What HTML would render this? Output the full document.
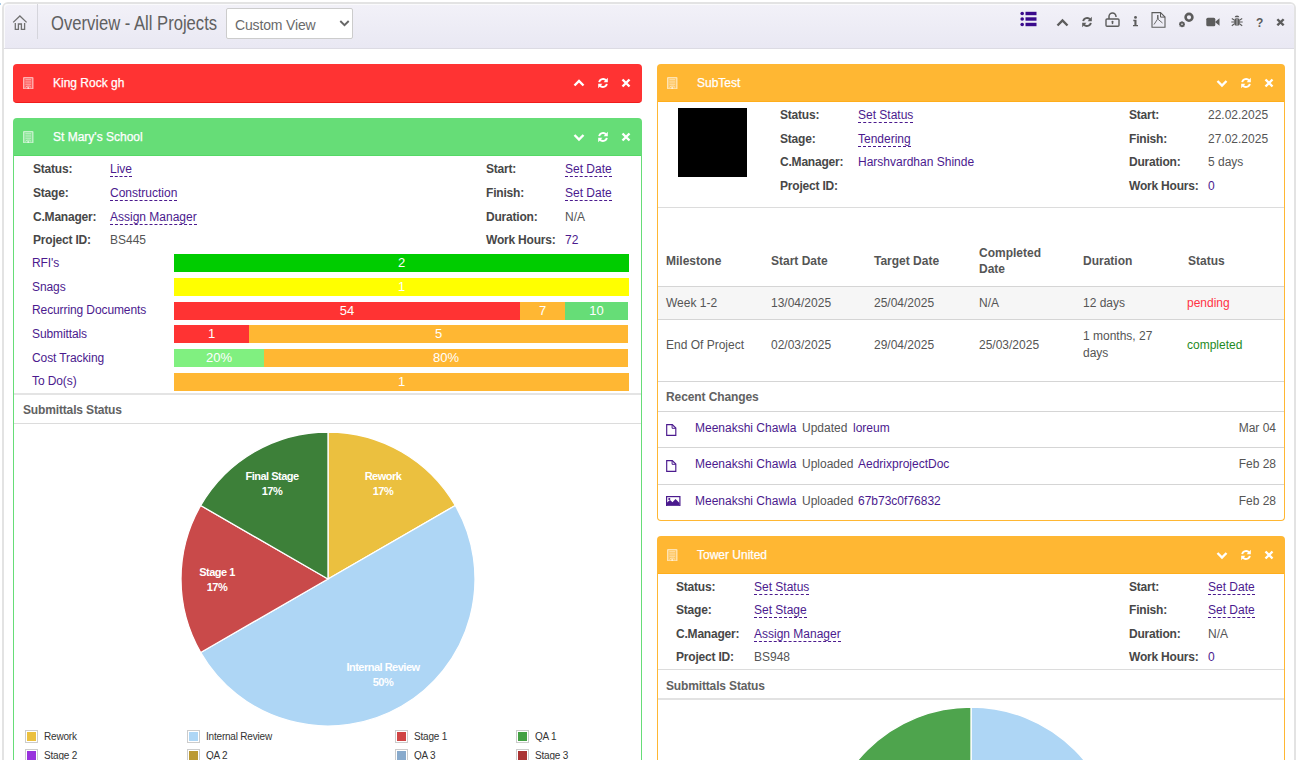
<!DOCTYPE html>
<html><head><meta charset="utf-8">
<style>
*{box-sizing:border-box;margin:0;padding:0}
html,body{width:1300px;height:760px;overflow:hidden;background:#fff;font-family:"Liberation Sans",sans-serif;font-size:12px;color:#555;position:relative}
.a{position:absolute}
.t{position:absolute;white-space:nowrap}
.b{font-weight:bold}
.dl{color:#4b1a8e;border-bottom:1px dashed #4b1a8e}
.bar{position:absolute;height:18px;color:#fff;text-align:center;line-height:18px;font-size:13px;overflow:hidden}
.pl{position:absolute;color:#fff;font-weight:bold;font-size:11px;text-align:center;line-height:15px;width:120px;letter-spacing:-0.5px}
.lg{position:absolute;width:13px;height:13px;border:1px solid #ccc;padding:1px;background:#fff}
.lg i{display:block;width:9px;height:9px}
.lt{position:absolute;font-size:10px;color:#333;line-height:13px;white-space:nowrap}
</style></head><body>
<div class="a" style="left:2px;top:2px;width:1294px;height:820px;border:2px solid #e3e3e3;border-radius:6px;background:#fff"></div>
<div class="a" style="left:4px;top:4px;width:1290px;height:45px;background:linear-gradient(#f2f1f8,#e9e8f3);border-bottom:1px solid #dcdbe3;border-radius:4px 4px 0 0;box-shadow:inset 1px 1px #fafafc"></div>
<div class="a" style="left:0px;top:3px;width:1px;height:2px;background:#a8cbe8"></div>
<div class="a" style="left:37px;top:4px;width:1px;height:35px;background:#d5d5dc"></div>
<svg class="a" style="left:8px;top:10px" width="24" height="24" viewBox="0 0 24 24"><path d="M5.2 12.4 L11.9 6 L18.6 12.4" fill="none" stroke="#707070" stroke-width="1.3"/><path d="M7.3 13 V19.3 H10.4 V14 H13.4 V19.3 H16.6 V13" fill="none" stroke="#707070" stroke-width="1.3"/></svg>
<div class="t " style="left:51px;top:11.87px;font-size:20px;line-height:22px;color:#606060;transform:scaleX(0.83);transform-origin:0 0">Overview - All Projects</div>
<div class="a" style="left:226px;top:8px;width:127px;height:31px;border:1px solid #ccc;background:#fff;border-radius:2px"></div>
<div class="t " style="left:235px;top:16.95px;font-size:14px;line-height:16px;color:#6a6a6a;letter-spacing:-0.15px">Custom View</div>
<svg class="a" style="left:339px;top:19px" width="11" height="9" viewBox="0 0 11 9"><path d="M1.3 2 L5.5 6.2 L9.7 2" fill="none" stroke="#666" stroke-width="1.9"/></svg>
<svg class="a" style="left:1020px;top:11px" width="17" height="16" viewBox="0 0 17 16"><circle cx="2.2" cy="2.5" r="1.8" fill="#3a0a8c"/><circle cx="2.2" cy="8" r="1.8" fill="#3a0a8c"/><circle cx="2.2" cy="13.5" r="1.8" fill="#3a0a8c"/><rect x="5.5" y="0.8" width="11" height="3.4" fill="#3a0a8c"/><rect x="5.5" y="6.3" width="11" height="3.4" fill="#3a0a8c"/><rect x="5.5" y="11.8" width="11" height="3.4" fill="#3a0a8c"/></svg>
<svg class="a" style="left:1056px;top:18px" width="13" height="9" viewBox="0 0 13 9"><path d="M1.5 7.5 L6.5 2.5 L11.5 7.5" fill="none" stroke="#5c5c5c" stroke-width="2.4"/></svg>
<svg class="a" style="left:1081px;top:15.5px" width="12" height="12" viewBox="0 0 12 12"><path d="M2.2 5.2 A3.9 3.9 0 0 1 9.2 3.6" fill="none" stroke="#5c5c5c" stroke-width="1.9"/><path d="M10.8 0.8 V5.2 H6.6 Z" fill="#5c5c5c"/><path d="M9.8 6.8 A3.9 3.9 0 0 1 2.8 8.4" fill="none" stroke="#5c5c5c" stroke-width="1.9"/><path d="M1.2 11.2 V6.8 H5.4 Z" fill="#5c5c5c"/></svg>
<svg class="a" style="left:1105px;top:12px" width="15" height="15" viewBox="0 0 15 15"><path d="M4 7 V4.5 A3.5 3.5 0 0 1 11 4.5 V5" fill="none" stroke="#5c5c5c" stroke-width="1.5"/><rect x="1" y="7" width="13" height="7.3" rx="1" fill="none" stroke="#5c5c5c" stroke-width="1.4"/><rect x="6.8" y="9.5" width="1.4" height="2.6" fill="#5c5c5c"/><circle cx="7.5" cy="9.8" r="1" fill="#5c5c5c"/></svg>
<svg class="a" style="left:1132px;top:16px" width="7" height="11" viewBox="0 0 7 11"><circle cx="3.5" cy="1.4" r="1.4" fill="#5c5c5c"/><path d="M1.3 3.8 H4.5 V8.9 H6 V10.3 H1 V8.9 H2.4 V5.2 H1.3 Z" fill="#5c5c5c"/></svg>
<svg class="a" style="left:1150.5px;top:11.5px" width="15" height="16" viewBox="0 0 15 16"><path d="M1 0.6 H9.5 L14 5.1 V15.3 H1 Z" fill="none" stroke="#5c5c5c" stroke-width="1.1"/><path d="M9.5 0.6 V5.1 H14" fill="none" stroke="#5c5c5c" stroke-width="1"/><path d="M3 12.5 L6.3 7.5 L6.8 3 L7.3 7.5 L11.5 11" fill="none" stroke="#5c5c5c" stroke-width="0.9"/></svg>
<svg class="a" style="left:1177.5px;top:11.5px" width="17" height="16" viewBox="0 0 17 16"><circle cx="11" cy="5.3" r="3.4" fill="none" stroke="#5c5c5c" stroke-width="2.6"/><circle cx="4" cy="12.3" r="1.9" fill="none" stroke="#5c5c5c" stroke-width="1.8"/><path d="M4 9.3 V15.3 M1 12.3 H7 M1.9 10.2 L6.1 14.4 M6.1 10.2 L1.9 14.4" stroke="#5c5c5c" stroke-width="0.9"/><circle cx="4" cy="12.3" r="0.8" fill="#eeeef4"/></svg>
<svg class="a" style="left:1205.5px;top:16.5px" width="14" height="10" viewBox="0 0 14 10"><rect x="0.3" y="0.8" width="9" height="8.4" rx="1.5" fill="#5c5c5c"/><path d="M9 5 L13.5 1.2 V8.8 Z" fill="#5c5c5c"/></svg>
<svg class="a" style="left:1231px;top:15px" width="12" height="12" viewBox="0 0 12 12"><path d="M3.7 2.3 A2.3 1.9 0 0 1 8.3 2.3 Z" fill="#5c5c5c"/><rect x="3.2" y="3.2" width="5.6" height="7.6" rx="2.3" fill="#5c5c5c"/><path d="M0.8 3.6 L3.2 5 M11.2 3.6 L8.8 5 M0.3 7 H3.2 M11.7 7 H8.8 M0.8 10.8 L3.2 9 M11.2 10.8 L8.8 9" stroke="#5c5c5c" stroke-width="1.1"/><rect x="5.7" y="3.8" width="0.6" height="7" fill="#eeeef4"/></svg>
<div class="t b" style="left:1256px;top:15.64px;font-size:12px;line-height:14px;color:#5c5c5c">?</div>
<svg class="a" style="left:1275.5px;top:17.8px" width="9" height="8.6" viewBox="0 0 10 10" preserveAspectRatio="none"><path d="M1.5 1.5 L8.5 8.5 M8.5 1.5 L1.5 8.5" stroke="#5c5c5c" stroke-width="2.7"/></svg>
<div class="a" style="left:13px;top:64px;width:629px;height:39px;background:#ff3333;border-radius:4px;border-bottom:1px solid #f01c1c"></div>
<svg class="a" style="left:23.3px;top:76.6px" width="10.5" height="12.5" viewBox="0 0 10.5 12.5"><rect x="0.65" y="0.65" width="9.2" height="11.2" rx="0.4" fill="rgba(255,255,255,0.22)" stroke="rgba(255,255,255,0.6)" stroke-width="1.3"/><path d="M2.4 2.5 H8.1 M2.4 4.2 H8.1 M2.4 5.9 H8.1 M2.4 7.6 H8.1" stroke="rgba(255,255,255,0.42)" stroke-width="0.9" fill="none"/><path d="M2.4 10.4 L3.9 9.2 H6.6 L8.1 10.4" stroke="rgba(255,255,255,0.5)" stroke-width="1" fill="none"/><rect x="4.4" y="10" width="1.7" height="2" fill="rgba(255,255,255,0.6)"/></svg>
<div class="t " style="left:53px;top:76.44px;font-size:12px;line-height:14px;color:#fff;-webkit-text-stroke:0.25px #fff">King Rock gh</div>
<svg class="a" style="left:573px;top:78px" width="12" height="10" viewBox="0 0 12 10"><path d="M1.5 7.5 L6 3 L10.5 7.5" fill="none" stroke="#fff" stroke-width="2.4"/></svg>
<svg class="a" style="left:597px;top:77px" width="12" height="12" viewBox="0 0 12 12"><path d="M2.2 5.2 A3.9 3.9 0 0 1 9.2 3.6" fill="none" stroke="#fff" stroke-width="1.9"/><path d="M10.8 0.8 V5.2 H6.6 Z" fill="#fff"/><path d="M9.8 6.8 A3.9 3.9 0 0 1 2.8 8.4" fill="none" stroke="#fff" stroke-width="1.9"/><path d="M1.2 11.2 V6.8 H5.4 Z" fill="#fff"/></svg>
<svg class="a" style="left:621px;top:78px" width="10" height="10" viewBox="0 0 10 10" preserveAspectRatio="none"><path d="M1.5 1.5 L8.5 8.5 M8.5 1.5 L1.5 8.5" stroke="#fff" stroke-width="2.4"/></svg>
<div class="a" style="left:13px;top:118px;width:629px;height:38px;background:#66dd77;border-radius:4px 4px 0 0;border-bottom:1px solid #55d866"></div>
<svg class="a" style="left:23.3px;top:130.6px" width="10.5" height="12.5" viewBox="0 0 10.5 12.5"><rect x="0.65" y="0.65" width="9.2" height="11.2" rx="0.4" fill="rgba(255,255,255,0.22)" stroke="rgba(255,255,255,0.6)" stroke-width="1.3"/><path d="M2.4 2.5 H8.1 M2.4 4.2 H8.1 M2.4 5.9 H8.1 M2.4 7.6 H8.1" stroke="rgba(255,255,255,0.42)" stroke-width="0.9" fill="none"/><path d="M2.4 10.4 L3.9 9.2 H6.6 L8.1 10.4" stroke="rgba(255,255,255,0.5)" stroke-width="1" fill="none"/><rect x="4.4" y="10" width="1.7" height="2" fill="rgba(255,255,255,0.6)"/></svg>
<div class="t " style="left:53px;top:130.44px;font-size:12px;line-height:14px;color:#fff;-webkit-text-stroke:0.25px #fff">St Mary's School</div>
<svg class="a" style="left:573px;top:132px" width="12" height="10" viewBox="0 0 12 10"><path d="M1.5 3 L6 7.5 L10.5 3" fill="none" stroke="#fff" stroke-width="2.4"/></svg>
<svg class="a" style="left:597px;top:131px" width="12" height="12" viewBox="0 0 12 12"><path d="M2.2 5.2 A3.9 3.9 0 0 1 9.2 3.6" fill="none" stroke="#fff" stroke-width="1.9"/><path d="M10.8 0.8 V5.2 H6.6 Z" fill="#fff"/><path d="M9.8 6.8 A3.9 3.9 0 0 1 2.8 8.4" fill="none" stroke="#fff" stroke-width="1.9"/><path d="M1.2 11.2 V6.8 H5.4 Z" fill="#fff"/></svg>
<svg class="a" style="left:621px;top:132px" width="10" height="10" viewBox="0 0 10 10" preserveAspectRatio="none"><path d="M1.5 1.5 L8.5 8.5 M8.5 1.5 L1.5 8.5" stroke="#fff" stroke-width="2.4"/></svg>
<div class="a" style="left:13px;top:155px;width:629px;height:700px;border:1px solid #66dd77;border-top:none"></div>
<div class="t b" style="left:33px;top:162.44px;font-size:12px;line-height:14px;color:#474747;letter-spacing:-0.2px">Status:</div>
<div class="t " style="left:110px;top:162.44px;font-size:12px;line-height:14px;"><span class="dl">Live</span></div>
<div class="t b" style="left:486px;top:162.44px;font-size:12px;line-height:14px;color:#474747;letter-spacing:-0.2px">Start:</div>
<div class="t " style="left:565px;top:162.44px;font-size:12px;line-height:14px;"><span class="dl">Set Date</span></div>
<div class="t b" style="left:33px;top:186.04px;font-size:12px;line-height:14px;color:#474747;letter-spacing:-0.2px">Stage:</div>
<div class="t " style="left:110px;top:186.04px;font-size:12px;line-height:14px;"><span class="dl">Construction</span></div>
<div class="t b" style="left:486px;top:186.04px;font-size:12px;line-height:14px;color:#474747;letter-spacing:-0.2px">Finish:</div>
<div class="t " style="left:565px;top:186.04px;font-size:12px;line-height:14px;"><span class="dl">Set Date</span></div>
<div class="t b" style="left:33px;top:209.54px;font-size:12px;line-height:14px;color:#474747;letter-spacing:-0.2px">C.Manager:</div>
<div class="t " style="left:110px;top:209.54px;font-size:12px;line-height:14px;"><span class="dl">Assign Manager</span></div>
<div class="t b" style="left:486px;top:209.54px;font-size:12px;line-height:14px;color:#474747;letter-spacing:-0.2px">Duration:</div>
<div class="t " style="left:565px;top:209.54px;font-size:12px;line-height:14px;color:#555">N/A</div>
<div class="t b" style="left:33px;top:233.04px;font-size:12px;line-height:14px;color:#474747;letter-spacing:-0.2px">Project ID:</div>
<div class="t " style="left:110px;top:233.04px;font-size:12px;line-height:14px;color:#555">BS445</div>
<div class="t b" style="left:486px;top:233.04px;font-size:12px;line-height:14px;color:#474747;letter-spacing:-0.2px">Work Hours:</div>
<div class="t " style="left:565px;top:233.04px;font-size:12px;line-height:14px;color:#4b1a8e">72</div>
<div class="t " style="left:32px;top:255.94px;font-size:12px;line-height:14px;color:#4b1a8e;letter-spacing:-0.1px">RFI's</div>
<div class="t " style="left:32px;top:279.64px;font-size:12px;line-height:14px;color:#4b1a8e;letter-spacing:-0.1px">Snags</div>
<div class="t " style="left:32px;top:303.34px;font-size:12px;line-height:14px;color:#4b1a8e;letter-spacing:-0.1px">Recurring Documents</div>
<div class="t " style="left:32px;top:327.04px;font-size:12px;line-height:14px;color:#4b1a8e;letter-spacing:-0.1px">Submittals</div>
<div class="t " style="left:32px;top:350.74px;font-size:12px;line-height:14px;color:#4b1a8e;letter-spacing:-0.1px">Cost Tracking</div>
<div class="t " style="left:32px;top:374.44px;font-size:12px;line-height:14px;color:#4b1a8e;letter-spacing:-0.1px">To Do(s)</div>
<div class="bar" style="left:174px;top:254.3px;width:455px;background:#00cc00;color:#fff">2</div>
<div class="bar" style="left:174px;top:278.0px;width:455px;background:#ffff00;color:#fff">1</div>
<div class="bar" style="left:174px;top:301.7px;width:346px;background:#ff3333;color:#fff">54</div>
<div class="bar" style="left:520px;top:301.7px;width:45px;background:#ffb733;color:#fff">7</div>
<div class="bar" style="left:565px;top:301.7px;width:63px;background:#66dd77;color:#fff">10</div>
<div class="bar" style="left:174px;top:325.4px;width:75px;background:#ff3333;color:#fff">1</div>
<div class="bar" style="left:249px;top:325.4px;width:379px;background:#ffb733;color:#fff">5</div>
<div class="bar" style="left:174px;top:349.1px;width:90px;background:#80f080;color:#fff">20%</div>
<div class="bar" style="left:264px;top:349.1px;width:364px;background:#ffb733;color:#fff">80%</div>
<div class="bar" style="left:174px;top:372.8px;width:455px;background:#ffb733;color:#fff">1</div>
<div class="a" style="left:14px;top:393px;width:627px;height:2px;background:#e4e4e4"></div>
<div class="t b" style="left:23px;top:403.14px;font-size:12px;line-height:14px;color:#626262;letter-spacing:-0.15px">Submittals Status</div>
<div class="a" style="left:14px;top:423px;width:627px;height:1px;background:#dcdcdc"></div>
<svg class="a" style="left:178.5px;top:430px" width="298" height="298" viewBox="178.5 430 298 298"><path d="M327.5 579 L327.50 432.00 A147 147 0 0 1 454.81 505.50 Z" fill="#ebc03f" stroke="#fff" stroke-width="1.3" stroke-linejoin="round"/><path d="M327.5 579 L454.81 505.50 A147 147 0 0 1 200.19 652.50 Z" fill="#aed6f5" stroke="#fff" stroke-width="1.3" stroke-linejoin="round"/><path d="M327.5 579 L200.19 652.50 A147 147 0 0 1 200.19 505.50 Z" fill="#c94a4a" stroke="#fff" stroke-width="1.3" stroke-linejoin="round"/><path d="M327.5 579 L200.19 505.50 A147 147 0 0 1 327.50 432.00 Z" fill="#3d8039" stroke="#fff" stroke-width="1.3" stroke-linejoin="round"/></svg>
<div class="pl" style="left:212px;top:469px">Final Stage<br>17%</div>
<div class="pl" style="left:323px;top:469px">Rework<br>17%</div>
<div class="pl" style="left:157px;top:565px">Stage 1<br>17%</div>
<div class="pl" style="left:323px;top:660px">Internal Review<br>50%</div>
<div class="lg" style="left:25px;top:730px"><i style="background:#ebc03f"></i></div>
<div class="lt" style="left:44px;top:730px;letter-spacing:-0.2px">Rework</div>
<div class="lg" style="left:187px;top:730px"><i style="background:#aed6f5"></i></div>
<div class="lt" style="left:206px;top:730px;letter-spacing:-0.2px">Internal Review</div>
<div class="lg" style="left:395px;top:730px"><i style="background:#d04545"></i></div>
<div class="lt" style="left:414px;top:730px;letter-spacing:-0.2px">Stage 1</div>
<div class="lg" style="left:516px;top:730px"><i style="background:#44a044"></i></div>
<div class="lt" style="left:535px;top:730px;letter-spacing:-0.2px">QA 1</div>
<div class="lg" style="left:25px;top:749px"><i style="background:#9933dd"></i></div>
<div class="lt" style="left:44px;top:749px;letter-spacing:-0.2px">Stage 2</div>
<div class="lg" style="left:187px;top:749px"><i style="background:#bb9933"></i></div>
<div class="lt" style="left:206px;top:749px;letter-spacing:-0.2px">QA 2</div>
<div class="lg" style="left:395px;top:749px"><i style="background:#88aacc"></i></div>
<div class="lt" style="left:414px;top:749px;letter-spacing:-0.2px">QA 3</div>
<div class="lg" style="left:516px;top:749px"><i style="background:#aa3333"></i></div>
<div class="lt" style="left:535px;top:749px;letter-spacing:-0.2px">Stage 3</div>
<div class="a" style="left:657px;top:64px;width:628px;height:38px;background:#ffb733;border-radius:4px 4px 0 0;border-bottom:1px solid #ffae1c"></div>
<svg class="a" style="left:667.3px;top:76.6px" width="10.5" height="12.5" viewBox="0 0 10.5 12.5"><rect x="0.65" y="0.65" width="9.2" height="11.2" rx="0.4" fill="rgba(255,255,255,0.22)" stroke="rgba(255,255,255,0.6)" stroke-width="1.3"/><path d="M2.4 2.5 H8.1 M2.4 4.2 H8.1 M2.4 5.9 H8.1 M2.4 7.6 H8.1" stroke="rgba(255,255,255,0.42)" stroke-width="0.9" fill="none"/><path d="M2.4 10.4 L3.9 9.2 H6.6 L8.1 10.4" stroke="rgba(255,255,255,0.5)" stroke-width="1" fill="none"/><rect x="4.4" y="10" width="1.7" height="2" fill="rgba(255,255,255,0.6)"/></svg>
<div class="t " style="left:697px;top:76.44px;font-size:12px;line-height:14px;color:#fff;-webkit-text-stroke:0.25px #fff">SubTest</div>
<svg class="a" style="left:1216px;top:78px" width="12" height="10" viewBox="0 0 12 10"><path d="M1.5 3 L6 7.5 L10.5 3" fill="none" stroke="#fff" stroke-width="2.4"/></svg>
<svg class="a" style="left:1240px;top:77px" width="12" height="12" viewBox="0 0 12 12"><path d="M2.2 5.2 A3.9 3.9 0 0 1 9.2 3.6" fill="none" stroke="#fff" stroke-width="1.9"/><path d="M10.8 0.8 V5.2 H6.6 Z" fill="#fff"/><path d="M9.8 6.8 A3.9 3.9 0 0 1 2.8 8.4" fill="none" stroke="#fff" stroke-width="1.9"/><path d="M1.2 11.2 V6.8 H5.4 Z" fill="#fff"/></svg>
<svg class="a" style="left:1264px;top:78px" width="10" height="10" viewBox="0 0 10 10" preserveAspectRatio="none"><path d="M1.5 1.5 L8.5 8.5 M8.5 1.5 L1.5 8.5" stroke="#fff" stroke-width="2.4"/></svg>
<div class="a" style="left:657px;top:101px;width:628px;height:420px;border:1px solid #ffb733;border-top:none;border-radius:0 0 4px 4px"></div>
<div class="a" style="left:678px;top:107.5px;width:68.5px;height:69.0px;background:#000;"></div>
<div class="t b" style="left:780px;top:108.14px;font-size:12px;line-height:14px;color:#474747;letter-spacing:-0.2px">Status:</div>
<div class="t " style="left:858px;top:108.14px;font-size:12px;line-height:14px;"><span class="dl">Set Status</span></div>
<div class="t b" style="left:1129px;top:108.14px;font-size:12px;line-height:14px;color:#474747;letter-spacing:-0.2px">Start:</div>
<div class="t " style="left:1208px;top:108.14px;font-size:12px;line-height:14px;color:#555">22.02.2025</div>
<div class="t b" style="left:780px;top:131.64px;font-size:12px;line-height:14px;color:#474747;letter-spacing:-0.2px">Stage:</div>
<div class="t " style="left:858px;top:131.64px;font-size:12px;line-height:14px;"><span class="dl">Tendering</span></div>
<div class="t b" style="left:1129px;top:131.64px;font-size:12px;line-height:14px;color:#474747;letter-spacing:-0.2px">Finish:</div>
<div class="t " style="left:1208px;top:131.64px;font-size:12px;line-height:14px;color:#555">27.02.2025</div>
<div class="t b" style="left:780px;top:155.14px;font-size:12px;line-height:14px;color:#474747;letter-spacing:-0.2px">C.Manager:</div>
<div class="t " style="left:858px;top:155.14px;font-size:12px;line-height:14px;color:#4b1a8e">Harshvardhan Shinde</div>
<div class="t b" style="left:1129px;top:155.14px;font-size:12px;line-height:14px;color:#474747;letter-spacing:-0.2px">Duration:</div>
<div class="t " style="left:1208px;top:155.14px;font-size:12px;line-height:14px;color:#555">5 days</div>
<div class="t b" style="left:780px;top:178.64px;font-size:12px;line-height:14px;color:#474747;letter-spacing:-0.2px">Project ID:</div>
<div class="t b" style="left:1129px;top:178.64px;font-size:12px;line-height:14px;color:#474747;letter-spacing:-0.2px">Work Hours:</div>
<div class="t " style="left:1208px;top:178.64px;font-size:12px;line-height:14px;color:#4b1a8e">0</div>
<div class="a" style="left:658px;top:207px;width:626px;height:1px;background:#dcdcdc"></div>
<div class="t b" style="left:666px;top:254.24px;font-size:12px;line-height:14px;color:#555">Milestone</div>
<div class="t b" style="left:771px;top:254.24px;font-size:12px;line-height:14px;color:#555">Start Date</div>
<div class="t b" style="left:874px;top:254.24px;font-size:12px;line-height:14px;color:#555">Target Date</div>
<div class="t b" style="left:1083px;top:254.24px;font-size:12px;line-height:14px;color:#555">Duration</div>
<div class="t b" style="left:1188px;top:254.24px;font-size:12px;line-height:14px;color:#555">Status</div>
<div class="t b" style="left:979px;top:245.74px;font-size:12px;line-height:14px;color:#555">Completed</div>
<div class="t b" style="left:979px;top:262.24px;font-size:12px;line-height:14px;color:#555">Date</div>
<div class="a" style="left:658px;top:286px;width:626px;height:1px;background:#d5d5d5"></div>
<div class="a" style="left:658px;top:287px;width:626px;height:32px;background:#f6f6f6;"></div>
<div class="a" style="left:658px;top:319px;width:626px;height:1px;background:#d5d5d5"></div>
<div class="t " style="left:666px;top:296.44px;font-size:12px;line-height:14px;color:#555">Week 1-2</div>
<div class="t " style="left:771px;top:296.44px;font-size:12px;line-height:14px;color:#555">13/04/2025</div>
<div class="t " style="left:874px;top:296.44px;font-size:12px;line-height:14px;color:#555">25/04/2025</div>
<div class="t " style="left:979px;top:296.44px;font-size:12px;line-height:14px;color:#555">N/A</div>
<div class="t " style="left:1083px;top:296.44px;font-size:12px;line-height:14px;color:#555">12 days</div>
<div class="t " style="left:1187px;top:296.44px;font-size:12px;line-height:14px;color:#ff3344">pending</div>
<div class="t " style="left:666px;top:337.64px;font-size:12px;line-height:14px;color:#555">End Of Project</div>
<div class="t " style="left:771px;top:337.64px;font-size:12px;line-height:14px;color:#555">02/03/2025</div>
<div class="t " style="left:874px;top:337.64px;font-size:12px;line-height:14px;color:#555">29/04/2025</div>
<div class="t " style="left:979px;top:337.64px;font-size:12px;line-height:14px;color:#555">25/03/2025</div>
<div class="t " style="left:1083px;top:329.24px;font-size:12px;line-height:14px;color:#555">1 months, 27</div>
<div class="t " style="left:1083px;top:346.24px;font-size:12px;line-height:14px;color:#555">days</div>
<div class="t " style="left:1187px;top:337.64px;font-size:12px;line-height:14px;color:#1e8a1e">completed</div>
<div class="a" style="left:658px;top:381px;width:626px;height:1px;background:#d5d5d5"></div>
<div class="t b" style="left:666px;top:390.24px;font-size:12px;line-height:14px;color:#626262;letter-spacing:-0.1px">Recent Changes</div>
<div class="a" style="left:658px;top:411px;width:626px;height:1px;background:#d5d5d5"></div>
<svg class="a" style="left:666px;top:423.59999999999997px" width="10.5" height="12" viewBox="0 0 10.5 12"><path d="M0.7 0.6 H6.3 L9.8 4.1 V11.4 H0.7 Z" fill="none" stroke="#4b1a8e" stroke-width="1.15"/><path d="M6.1 0.6 V4.3 H9.8" fill="none" stroke="#4b1a8e" stroke-width="1"/></svg>
<div class="t " style="left:695px;top:420.84px;font-size:12px;line-height:14px;color:#4b1a8e">Meenakshi Chawla</div>
<div class="t " style="left:802px;top:420.84px;font-size:12px;line-height:14px;color:#555">Updated</div>
<div class="t " style="left:853px;top:420.84px;font-size:12px;line-height:14px;color:#4b1a8e">loreum</div>
<div class="t" style="right:24px;top:420.84px;color:#555">Mar 04</div>
<svg class="a" style="left:666px;top:460.09999999999997px" width="10.5" height="12" viewBox="0 0 10.5 12"><path d="M0.7 0.6 H6.3 L9.8 4.1 V11.4 H0.7 Z" fill="none" stroke="#4b1a8e" stroke-width="1.15"/><path d="M6.1 0.6 V4.3 H9.8" fill="none" stroke="#4b1a8e" stroke-width="1"/></svg>
<div class="t " style="left:695px;top:457.34px;font-size:12px;line-height:14px;color:#4b1a8e">Meenakshi Chawla</div>
<div class="t " style="left:802px;top:457.34px;font-size:12px;line-height:14px;color:#555">Uploaded</div>
<div class="t " style="left:858px;top:457.34px;font-size:12px;line-height:14px;color:#4b1a8e">AedrixprojectDoc</div>
<div class="t" style="right:24px;top:457.34px;color:#555">Feb 28</div>
<svg class="a" style="left:666px;top:495.8px" width="14.5" height="10.5" viewBox="0 0 14.5 10.5"><rect x="0.6" y="0.6" width="13.3" height="9.3" fill="#fff" stroke="#4b1a8e" stroke-width="1.2"/><path d="M1 9.5 V6.5 L4 4 L6.5 6.3 L9.5 3 L13.5 7 V9.5 Z" fill="#4b1a8e"/><circle cx="3.3" cy="3" r="1.1" fill="#4b1a8e"/></svg>
<div class="t " style="left:695px;top:493.84px;font-size:12px;line-height:14px;color:#4b1a8e">Meenakshi Chawla</div>
<div class="t " style="left:802px;top:493.84px;font-size:12px;line-height:14px;color:#555">Uploaded</div>
<div class="t " style="left:858px;top:493.84px;font-size:12px;line-height:14px;color:#4b1a8e">67b73c0f76832</div>
<div class="t" style="right:24px;top:493.84px;color:#555">Feb 28</div>
<div class="a" style="left:658px;top:447px;width:626px;height:1px;background:#d5d5d5"></div>
<div class="a" style="left:658px;top:484px;width:626px;height:1px;background:#d5d5d5"></div>
<div class="a" style="left:657px;top:536px;width:628px;height:38px;background:#ffb733;border-radius:4px 4px 0 0;border-bottom:1px solid #ffae1c"></div>
<svg class="a" style="left:667.3px;top:548.6px" width="10.5" height="12.5" viewBox="0 0 10.5 12.5"><rect x="0.65" y="0.65" width="9.2" height="11.2" rx="0.4" fill="rgba(255,255,255,0.22)" stroke="rgba(255,255,255,0.6)" stroke-width="1.3"/><path d="M2.4 2.5 H8.1 M2.4 4.2 H8.1 M2.4 5.9 H8.1 M2.4 7.6 H8.1" stroke="rgba(255,255,255,0.42)" stroke-width="0.9" fill="none"/><path d="M2.4 10.4 L3.9 9.2 H6.6 L8.1 10.4" stroke="rgba(255,255,255,0.5)" stroke-width="1" fill="none"/><rect x="4.4" y="10" width="1.7" height="2" fill="rgba(255,255,255,0.6)"/></svg>
<div class="t " style="left:697px;top:548.44px;font-size:12px;line-height:14px;color:#fff;-webkit-text-stroke:0.25px #fff">Tower United</div>
<svg class="a" style="left:1216px;top:550px" width="12" height="10" viewBox="0 0 12 10"><path d="M1.5 3 L6 7.5 L10.5 3" fill="none" stroke="#fff" stroke-width="2.4"/></svg>
<svg class="a" style="left:1240px;top:549px" width="12" height="12" viewBox="0 0 12 12"><path d="M2.2 5.2 A3.9 3.9 0 0 1 9.2 3.6" fill="none" stroke="#fff" stroke-width="1.9"/><path d="M10.8 0.8 V5.2 H6.6 Z" fill="#fff"/><path d="M9.8 6.8 A3.9 3.9 0 0 1 2.8 8.4" fill="none" stroke="#fff" stroke-width="1.9"/><path d="M1.2 11.2 V6.8 H5.4 Z" fill="#fff"/></svg>
<svg class="a" style="left:1264px;top:550px" width="10" height="10" viewBox="0 0 10 10" preserveAspectRatio="none"><path d="M1.5 1.5 L8.5 8.5 M8.5 1.5 L1.5 8.5" stroke="#fff" stroke-width="2.4"/></svg>
<div class="a" style="left:657px;top:573px;width:628px;height:400px;border:1px solid #ffb733;border-top:none"></div>
<div class="t b" style="left:676px;top:579.54px;font-size:12px;line-height:14px;color:#474747;letter-spacing:-0.2px">Status:</div>
<div class="t " style="left:754px;top:579.54px;font-size:12px;line-height:14px;"><span class="dl">Set Status</span></div>
<div class="t b" style="left:1129px;top:579.54px;font-size:12px;line-height:14px;color:#474747;letter-spacing:-0.2px">Start:</div>
<div class="t " style="left:1208px;top:579.54px;font-size:12px;line-height:14px;"><span class="dl">Set Date</span></div>
<div class="t b" style="left:676px;top:603.04px;font-size:12px;line-height:14px;color:#474747;letter-spacing:-0.2px">Stage:</div>
<div class="t " style="left:754px;top:603.04px;font-size:12px;line-height:14px;"><span class="dl">Set Stage</span></div>
<div class="t b" style="left:1129px;top:603.04px;font-size:12px;line-height:14px;color:#474747;letter-spacing:-0.2px">Finish:</div>
<div class="t " style="left:1208px;top:603.04px;font-size:12px;line-height:14px;"><span class="dl">Set Date</span></div>
<div class="t b" style="left:676px;top:626.54px;font-size:12px;line-height:14px;color:#474747;letter-spacing:-0.2px">C.Manager:</div>
<div class="t " style="left:754px;top:626.54px;font-size:12px;line-height:14px;"><span class="dl">Assign Manager</span></div>
<div class="t b" style="left:1129px;top:626.54px;font-size:12px;line-height:14px;color:#474747;letter-spacing:-0.2px">Duration:</div>
<div class="t " style="left:1208px;top:626.54px;font-size:12px;line-height:14px;color:#555">N/A</div>
<div class="t b" style="left:676px;top:650.04px;font-size:12px;line-height:14px;color:#474747;letter-spacing:-0.2px">Project ID:</div>
<div class="t " style="left:754px;top:650.04px;font-size:12px;line-height:14px;color:#555">BS948</div>
<div class="t b" style="left:1129px;top:650.04px;font-size:12px;line-height:14px;color:#474747;letter-spacing:-0.2px">Work Hours:</div>
<div class="t " style="left:1208px;top:650.04px;font-size:12px;line-height:14px;color:#4b1a8e">0</div>
<div class="a" style="left:658px;top:669px;width:626px;height:1px;background:#dcdcdc"></div>
<div class="t b" style="left:666px;top:679.14px;font-size:12px;line-height:14px;color:#626262;letter-spacing:-0.15px">Submittals Status</div>
<div class="a" style="left:658px;top:698px;width:626px;height:2px;background:#e2e2e2"></div>
<svg class="a" style="left:822px;top:705px" width="298" height="298" viewBox="822 705 298 298"><path d="M971 854 L971.00 707.00 A147 147 0 0 1 971.00 1001.00 Z" fill="#aed6f5" stroke="#fff" stroke-width="1.3" stroke-linejoin="round"/><path d="M971 854 L971.00 1001.00 A147 147 0 0 1 824.00 854.00 Z" fill="#aed6f5" stroke="#fff" stroke-width="1.3" stroke-linejoin="round"/><path d="M971 854 L824.00 854.00 A147 147 0 0 1 971.00 707.00 Z" fill="#4ea44d" stroke="#fff" stroke-width="1.3" stroke-linejoin="round"/></svg>
</body></html>
